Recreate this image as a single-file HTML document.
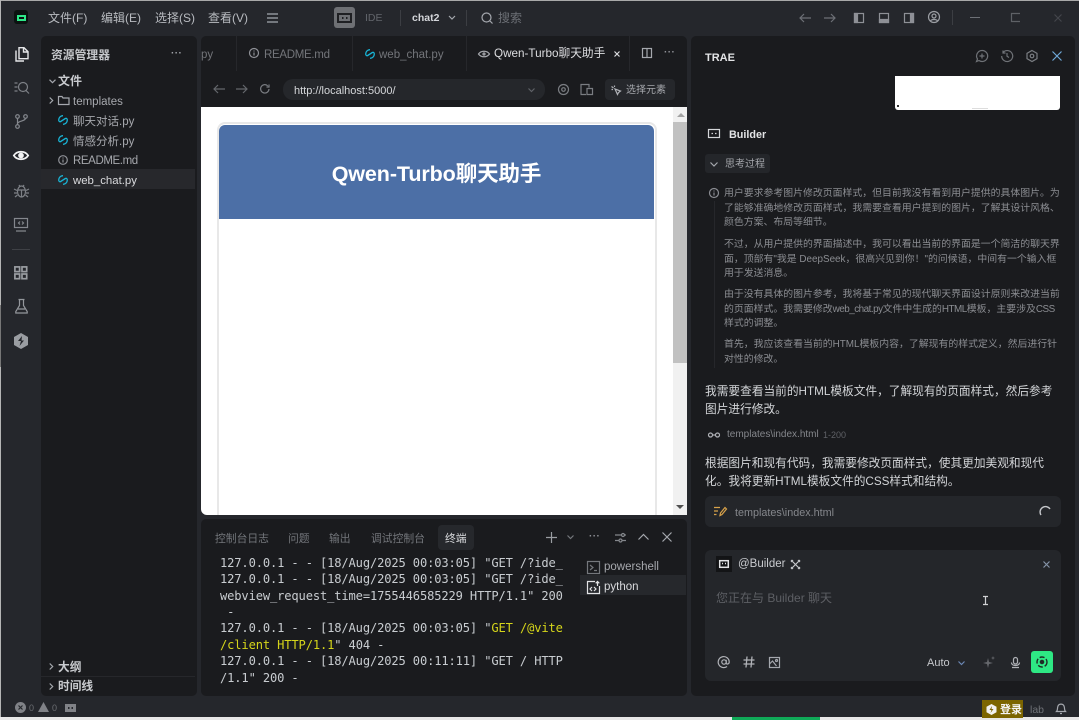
<!DOCTYPE html>
<html lang="zh">
<head>
<meta charset="utf-8">
<title>TRAE</title>
<style>
html,body{margin:0;padding:0;width:1079px;height:720px;overflow:hidden;background:#25272c}
body{position:relative;font-family:"Liberation Sans","Noto Sans CJK SC",sans-serif;color:#c9cbd0;font-size:12px}
.a{position:absolute;white-space:nowrap;line-height:16px}
svg{position:absolute;overflow:visible;fill:none;stroke:#a5a8ae;stroke-width:1.2}
.panel{position:absolute;background:#1a1b1e;border-radius:5px}
.mono{font-family:"DejaVu Sans Mono","Liberation Mono",monospace;font-size:12.1px;color:#c8ccd0;letter-spacing:-.14px}
.think{color:#8b8d92;font-size:9.900px;line-height:14.5px;left:724px}
.msg{color:#d3d5d8;font-size:11.7px;left:705px;line-height:18px}
.py{stroke:#18b4d6;stroke-width:1.3}
.n{letter-spacing:-.5px}
</style>
</head>
<body>
<!-- window edges -->
<div class="a" style="left:0;top:0;width:1079px;height:1px;background:#a9a9a9"></div>
<div class="a" style="left:0;top:0;width:1px;height:720px;background:#b5b5b5"></div>
<div class="a" style="left:0;top:717px;width:1079px;height:3px;background:#e8e8e8"></div>
<div class="a" style="left:732px;top:717px;width:88px;height:3px;background:#0fa958"></div>
<div class="a" style="left:0;top:305px;width:1px;height:62px;background:#777"></div>

<!-- title bar -->
<div class="a" style="left:14px;top:10px;width:14px;height:14px;background:#0b1210;border-radius:3px"></div>
<div class="a" style="left:17px;top:15px;width:9px;height:6px;border:2px solid #2de888;box-sizing:border-box"></div>
<div class="a" style="left:48px;top:10px;font-size:12px;color:#b8bbc0">文件(F)</div>
<div class="a" style="left:101px;top:10px;font-size:12px;color:#b8bbc0">编辑(E)</div>
<div class="a" style="left:155px;top:10px;font-size:12px;color:#b8bbc0">选择(S)</div>
<div class="a" style="left:208px;top:10px;font-size:12px;color:#b8bbc0">查看(V)</div>
<svg style="left:267px;top:13px" width="12" height="10"><path d="M0 1h11M0 5h11M0 9h11"/></svg>
<div class="a" style="left:334px;top:7px;width:21px;height:21px;background:#6e7074;border-radius:3px"></div>
<svg style="left:337px;top:13px;stroke:#1f2023;stroke-width:2" width="15" height="10"><rect x="1" y="1" width="13" height="8"/><path d="M5 5h1.500M9 5h1.500"/></svg>
<div class="a" style="left:365px;top:10px;font-size:10.500px;color:#62656b">IDE</div>
<div class="a" style="left:400px;top:10px;width:1px;height:16px;background:#3c3e43"></div>
<div class="a" style="left:412px;top:10px;font-size:10.500px;font-weight:bold;color:#d4d6da">chat2</div>
<svg style="left:448px;top:15px" width="8" height="5"><path d="M1 1l3 3 3-3"/></svg>
<div class="a" style="left:466px;top:10px;width:1px;height:16px;background:#3c3e43"></div>
<svg style="left:481px;top:12px" width="12" height="12"><circle cx="5.500" cy="5.500" r="4.500"/><path d="M9 9l2.500 2.500"/></svg>
<div class="a" style="left:498px;top:10px;font-size:12px;color:#6c6f75">搜索</div>
<svg style="left:799px;top:12px;stroke:#6d7076" width="12" height="12"><path d="M12 6H1M5 2L1 6l4 4"/></svg>
<svg style="left:824px;top:12px;stroke:#6d7076" width="12" height="12"><path d="M0 6h11M7 2l4 4-4 4"/></svg>
<svg style="left:854px;top:13px;stroke:#8e9096" width="10" height="10"><rect x=".5" y=".5" width="9" height="9"/><rect x=".5" y=".5" width="3" height="9" fill="#8e9096"/></svg>
<svg style="left:879px;top:13px;stroke:#8e9096" width="10" height="10"><rect x=".5" y=".5" width="9" height="9"/><rect x=".5" y="6.500" width="9" height="3" fill="#8e9096"/></svg>
<svg style="left:904px;top:13px;stroke:#8e9096" width="10" height="10"><rect x=".5" y=".5" width="9" height="9"/><rect x="6.500" y=".5" width="3" height="9" fill="#8e9096"/></svg>
<svg style="left:928px;top:11px;stroke:#9b9ea3" width="12" height="12"><circle cx="6" cy="6" r="5.500"/><circle cx="6" cy="5" r="2"/><path d="M2.500 10c1-2 6-2 7 0"/></svg>
<div class="a" style="left:952px;top:10px;width:1px;height:15px;background:#3c3e43"></div>
<div class="a" style="left:970px;top:17px;width:10px;height:1px;background:#6d7076"></div>
<svg style="left:1011px;top:13px;stroke:#5e6166" width="9" height="9"><path d="M9 .5H.5v8H9"/></svg>
<svg style="left:1054px;top:14px;stroke:#44464b" width="8" height="8"><path d="M.5.500l7 7M7.500.500l-7 7"/></svg>

<!-- activity bar -->
<svg style="left:15px;top:47px;stroke:#e6e7e9;stroke-width:1.400" width="14" height="15"><path d="M4 .7h5l4 4v7H4zM8.500 1v4h4M1 3.500v10.500h8"/></svg>
<svg style="left:14px;top:81px;stroke:#7d8086" width="16" height="13"><circle cx="9" cy="6" r="4.500"/><path d="M12 9.500l3 3M.5 2h3M.5 6h3M.5 10h3"/></svg>
<svg style="left:15px;top:114px;stroke:#84878d" width="13" height="15"><circle cx="2.500" cy="2.500" r="1.800"/><circle cx="2.500" cy="12.500" r="1.800"/><circle cx="10.500" cy="2.500" r="1.800"/><path d="M2.500 4.300v6.400M10.500 4.300c0 3-8 2.500-8 5.500"/></svg>
<svg style="left:13px;top:150px;stroke:#f2f3f4;stroke-width:1.700" width="16" height="11"><path d="M.8 5.500C4 .5 12 .5 15.200 5.500 12 10.500 4 10.500.8 5.500z"/><circle cx="8" cy="5.500" r="2" fill="#f2f3f4"/></svg>
<svg style="left:14px;top:183px;stroke:#7d8086" width="15" height="15"><ellipse cx="7.500" cy="8.500" rx="4" ry="5.500"/><path d="M4 7h7M7.500 7v7M5 2l1 1.500M10 2L9 3.500M0 6l3 1.500M15 6l-3 1.500M0 10h3M15 10h-3M1 14l2.500-2M14 14l-2.500-2"/></svg>
<svg style="left:14px;top:218px;stroke:#84878d" width="14" height="14"><rect x=".5" y=".5" width="13" height="9"/><path d="M2 13h10M6 3.500L4.500 5 6 6.500M8 3.500L9.500 5 8 6.500"/></svg>
<div class="a" style="left:12px;top:249px;width:18px;height:1px;background:#3f4146"></div>
<svg style="left:14px;top:266px;stroke:#9a9da2;stroke-width:1.700" width="14" height="14"><rect x=".9" y=".9" width="4.700" height="4.700"/><rect x="8" y=".9" width="4.700" height="4.700"/><rect x=".9" y="8" width="4.700" height="4.700"/><rect x="8" y="8" width="4.700" height="4.700"/></svg>
<svg style="left:15px;top:299px;stroke:#94979c" width="13" height="15"><path d="M3.500.5h6M4.500.5v6L.8 12.500v1.500h11.400v-1.500L8.500 6.500v-6M3 10h7"/></svg>
<svg style="left:14px;top:333px;stroke:none;fill:#9a9da2" width="14" height="16"><path d="M7 0l7 4v8l-7 4-7-4V4z"/><path fill="#25272c" d="M8 3L4 8h3L5.500 13 10 7.500H7.500z"/></svg>

<!-- explorer -->
<div class="panel" style="left:41px;top:36px;width:156px;height:660px"></div>
<div class="a" style="left:51px;top:47px;font-size:11.800px;color:#c5c7cb;font-weight:bold">资源管理器</div>
<div class="a" style="left:171px;top:46px;font-size:10px;color:#a0a3a8;font-weight:bold;letter-spacing:.4px">···</div>
<svg style="left:49px;top:79px" width="7" height="5"><path d="M.5.700L3.500 3.700 6.500.700"/></svg>
<div class="a" style="left:58px;top:73px;font-size:12px;font-weight:bold;color:#c9cbcf">文件</div>
<svg style="left:49px;top:97px" width="5" height="7"><path d="M.7.500l3 3-3 3"/></svg>
<svg style="left:58px;top:96px" width="11" height="9"><path d="M.5.500h3.500l1 1.500h6v6.500H.5z"/></svg>
<div class="a" style="left:73px;top:94px;font-size:11.500px;color:#a6a8ad">templates</div>
<svg class="py" style="left:58px;top:115px" width="10" height="10"><path d="M5 .7A4.300 4.300 0 0 0 .7 5c0 1.500 1 2 2 1.500L7.500 3.500M5 9.300A4.300 4.300 0 0 0 9.300 5c0-1.500-1-2-2-1.500L2.500 6.500"/></svg>
<div class="a" style="left:73px;top:114px;font-size:11.500px;color:#a6a8ad">聊天对话.py</div>
<svg class="py" style="left:58px;top:135px" width="10" height="10"><path d="M5 .7A4.300 4.300 0 0 0 .7 5c0 1.500 1 2 2 1.500L7.500 3.500M5 9.300A4.300 4.300 0 0 0 9.300 5c0-1.500-1-2-2-1.500L2.500 6.500"/></svg>
<div class="a" style="left:73px;top:134px;font-size:11.500px;color:#a6a8ad">情感分析.py</div>
<svg style="left:58px;top:155px;stroke:#8f9197" width="10" height="10"><circle cx="5" cy="5" r="4.300"/><path d="M5 4.500v3M5 2.500v1"/></svg>
<div class="a" style="left:73px;top:153px;font-size:11.500px;color:#a6a8ad;letter-spacing:-.4px">README.md</div>
<div class="a" style="left:41px;top:169px;width:154px;height:20px;background:#27282c"></div>
<svg class="py" style="left:58px;top:175px" width="10" height="10"><path d="M5 .7A4.300 4.300 0 0 0 .7 5c0 1.500 1 2 2 1.500L7.500 3.500M5 9.300A4.300 4.300 0 0 0 9.300 5c0-1.500-1-2-2-1.500L2.500 6.500"/></svg>
<div class="a" style="left:73px;top:173px;font-size:11.400px;color:#d9dadd">web_chat.py</div>
<svg style="left:49px;top:663px" width="5" height="7"><path d="M.7.500l3 3-3 3"/></svg>
<div class="a" style="left:58px;top:660px;font-size:11.700px;font-weight:bold;color:#c9cbcf">大纲</div>
<div class="a" style="left:41px;top:676px;width:154px;height:1px;background:#26272b"></div>
<svg style="left:49px;top:683px" width="5" height="7"><path d="M.7.500l3 3-3 3"/></svg>
<div class="a" style="left:58px;top:679px;font-size:11.700px;font-weight:bold;color:#c9cbcf">时间线</div>

<!-- editor -->
<div class="panel" style="left:201px;top:36px;width:486px;height:71px;border-radius:5px 5px 0 0"></div>
<div class="a" style="left:201px;top:47px;font-size:11.500px;color:#73757a">py</div>
<div class="a" style="left:236px;top:36px;width:1px;height:35px;background:#26272b"></div>
<svg style="left:249px;top:48px;stroke:#8f9197" width="10" height="10"><circle cx="5" cy="5" r="4.500"/><path d="M5 4.500v3M5 2.500v1"/></svg>
<div class="a" style="left:264px;top:47px;font-size:11.500px;color:#73757a;letter-spacing:-.3px">README.md</div>
<div class="a" style="left:352px;top:36px;width:1px;height:35px;background:#26272b"></div>
<svg class="py" style="left:365px;top:49px" width="10" height="10"><path d="M5 .7A4.300 4.300 0 0 0 .7 5c0 1.500 1 2 2 1.500L7.500 3.500M5 9.300A4.300 4.300 0 0 0 9.300 5c0-1.500-1-2-2-1.500L2.500 6.500"/></svg>
<div class="a" style="left:379px;top:47px;font-size:11.500px;color:#73757a">web_chat.py</div>
<div class="a" style="left:466px;top:36px;width:1px;height:35px;background:#26272b"></div>
<svg style="left:478px;top:50px;stroke:#a6a8ad" width="12" height="8"><path d="M.5 4C3 .300 9 .300 11.500 4 9 7.700 3 7.700.500 4z"/><circle cx="6" cy="4" r="1"/></svg>
<div class="a" style="left:494px;top:46px;font-size:11.700px;color:#dcdde0">Qwen-Turbo聊天助手</div>
<svg style="left:614px;top:51px;stroke:#dcdde0" width="6" height="6"><path d="M.5.500l5 5M5.500.500l-5 5"/></svg>
<div class="a" style="left:629px;top:36px;width:1px;height:35px;background:#26272b"></div>
<svg style="left:642px;top:48px;stroke:#a5a8ae" width="10" height="10"><rect x=".5" y=".5" width="9" height="9"/><path d="M5 .5v9"/></svg>
<div class="a" style="left:664px;top:45px;font-size:10px;color:#8e9096;font-weight:bold;letter-spacing:.4px">···</div>
<svg style="left:213px;top:84px;stroke:#64676c" width="12" height="10"><path d="M12 5H1M5 1L1 5l4 4"/></svg>
<svg style="left:236px;top:84px;stroke:#64676c" width="12" height="10"><path d="M0 5h11M7 1l4 4-4 4"/></svg>
<svg style="left:260px;top:84px;stroke:#7a7d82" width="10" height="10"><path d="M9 5a4.200 4.200 0 1 1-1.300-3.200M9 .5v2.500H6.500"/></svg>
<div class="a" style="left:283px;top:79px;width:262px;height:21px;background:#25272b;border-radius:10px"></div>
<div class="a" style="left:294px;top:83px;font-size:11px;color:#d5d7da">http://localhost:5000/</div>
<svg style="left:528px;top:88px;stroke:#5f6267" width="7" height="4"><path d="M.5.500l3 3 3-3"/></svg>
<svg style="left:558px;top:84px;stroke:#7a7d82" width="11" height="11"><circle cx="5.500" cy="5.500" r="5"/><circle cx="5.500" cy="5.500" r="1.800"/></svg>
<svg style="left:580px;top:84px;stroke:#7a7d82" width="13" height="11"><path d="M1 10.500V.5h8v3M.5 10.500H6M7 4.500h5.500v6H7z"/></svg>
<div class="a" style="left:605px;top:79px;width:70px;height:21px;background:#25272b;border-radius:4px"></div>
<svg style="left:611px;top:85px;stroke:#b0b2b7" width="10" height="10"><path d="M4 4l5.500 2-2 1.500-1 2zM.5 1.500l2 1.500M3.500.5v1.500M.5 4.500h1.500"/></svg>
<div class="a" style="left:626px;top:83px;font-size:10px;color:#a6a8ad">选择元素</div>

<!-- webview -->
<div class="a" style="left:201px;top:107px;width:486px;height:408px;background:#fff;border-radius:0 0 6px 6px"></div>
<div class="a" style="left:217px;top:122px;width:440px;height:393px;background:#fff;border:2px solid #e8e8e8;border-bottom:0;border-radius:8px 8px 0 0;box-sizing:border-box"></div>
<div class="a" style="left:219px;top:125px;width:435px;height:94px;background:#4c6fa6;border-radius:6px 6px 0 0"></div>
<div class="a" style="left:219px;top:160px;width:435px;text-align:center;font-size:21.500px;line-height:28px;font-weight:bold;color:#fff;letter-spacing:-.1px">Qwen-Turbo聊天助手</div>
<div class="a" style="left:673px;top:107px;width:14px;height:408px;background:#f1f1f1"></div>
<div class="a" style="left:673px;top:122px;width:14px;height:241px;background:#c1c1c1"></div>
<div class="a" style="left:677px;top:113px;width:0;height:0;border:4px solid transparent;border-bottom-color:#a3a3a3;border-top:0"></div>
<div class="a" style="left:676px;top:505px;width:0;height:0;border:4.500px solid transparent;border-top-color:#505050;border-bottom:0"></div>

<!-- terminal -->
<div class="panel" style="left:201px;top:519px;width:486px;height:177px"></div>
<div class="a" style="left:215px;top:531px;font-size:10.800px;color:#73767b">控制台日志</div>
<div class="a" style="left:288px;top:531px;font-size:10.800px;color:#73767b">问题</div>
<div class="a" style="left:329px;top:531px;font-size:10.800px;color:#73767b">输出</div>
<div class="a" style="left:371px;top:531px;font-size:10.800px;color:#73767b">调试控制台</div>
<div class="a" style="left:438px;top:525px;width:36px;height:25px;background:#26282c;border-radius:4px"></div>
<div class="a" style="left:445px;top:531px;font-size:10.800px;color:#d9dadd">终端</div>
<svg style="left:546px;top:532px;stroke:#9a9da2" width="11" height="11"><path d="M5.500 0v11M0 5.500h11"/></svg>
<svg style="left:567px;top:535px;stroke:#74777c" width="7" height="4"><path d="M.5.500l3 3 3-3"/></svg>
<div class="a" style="left:589px;top:529px;font-size:10px;color:#8e9096;font-weight:bold;letter-spacing:.4px">···</div>
<svg style="left:615px;top:532px;stroke:#84878c" width="11" height="11"><path d="M0 3h6.500M0 8.500h3.500M7 8.500h4M11 3H9.500"/><circle cx="8" cy="3" r="1.500"/><circle cx="5.500" cy="8.500" r="1.500"/></svg>
<svg style="left:638px;top:534px;stroke:#a5a8ae" width="11" height="6"><path d="M.5 5.500L5.500.5l5 5"/></svg>
<svg style="left:662px;top:532px;stroke:#a5a8ae" width="10" height="10"><path d="M.5.500l9 9M9.500.500l-9 9"/></svg>
<div class="a mono" style="left:220px;top:555px">127.0.0.1 - - [18/Aug/2025 00:03:05] "GET /?ide_</div>
<div class="a mono" style="left:220px;top:571px">127.0.0.1 - - [18/Aug/2025 00:03:05] "GET /?ide_</div>
<div class="a mono" style="left:220px;top:588px">webview_request_time=1755446585229 HTTP/1.1" 200</div>
<div class="a mono" style="left:220px;top:604px">&nbsp;-</div>
<div class="a mono" style="left:220px;top:620px">127.0.0.1 - - [18/Aug/2025 00:03:05] "<span style="color:#d5d51a">GET /@vite</span></div>
<div class="a mono" style="left:220px;top:637px"><span style="color:#d5d51a">/client HTTP/1.1</span>" 404 -</div>
<div class="a mono" style="left:220px;top:653px">127.0.0.1 - - [18/Aug/2025 00:11:11] "GET / HTTP</div>
<div class="a mono" style="left:220px;top:670px">/1.1" 200 -</div>
<svg style="left:587px;top:561px;stroke:#74777c" width="13" height="13"><rect x=".5" y=".5" width="12" height="12"/><path d="M3 4l3 2.500L3 9M7 9.500h3"/></svg>
<div class="a" style="left:604px;top:559px;font-size:11.500px;color:#a6a8ad">powershell</div>
<div class="a" style="left:580px;top:575px;width:106px;height:20px;background:#26282c"></div>
<svg style="left:587px;top:581px;stroke:#e2e3e5" width="13" height="13"><path d="M8 .5H.5v12h12V5M10.500 5V.8M8.700 2.300L10.500.5l1.800 1.800M5 6L3 8l2 2M7 6l2 2-2 2"/></svg>
<div class="a" style="left:604px;top:579px;font-size:11.500px;color:#d9dadd">python</div>

<!-- right panel -->
<div class="panel" style="left:691px;top:36px;width:384px;height:660px"></div>
<div class="a" style="left:705px;top:50px;font-size:11px;font-weight:bold;color:#e3e4e6">TRAE</div>
<svg style="left:976px;top:50px;stroke:#6f7277" width="12" height="12"><path d="M6 .5a5.500 5.500 0 1 1-3 10L.5 11.500l1-2.500A5.500 5.500 0 0 1 6 .5zM6 3.500v5M3.500 6h5"/></svg>
<svg style="left:1001px;top:50px;stroke:#6f7277" width="12" height="12"><path d="M2 2.500A5.500 5.500 0 1 1 .7 6M2 .5v2.500h2.500M6 3v3.200l2 1.300"/></svg>
<svg style="left:1026px;top:50px;stroke:#7a7d82" width="12" height="12"><path d="M6 .5l5 2.800v5.400L6 11.500 1 8.700V3.300z"/><circle cx="6" cy="6" r="1.800"/></svg>
<svg style="left:1052px;top:51px;stroke:#6fa8d8" width="10" height="10"><path d="M.5.500l9 9M9.500.500l-9 9"/></svg>
<div class="a" style="left:895px;top:76px;width:165px;height:34px;background:#fff;border-radius:0 0 3px 3px"></div>
<div class="a" style="left:897px;top:105px;width:2px;height:2px;background:#333"></div>
<div class="a" style="left:972px;top:108px;width:16px;height:1px;background:#ddd"></div>
<svg style="left:708px;top:129px;stroke:#d5d7da" width="12" height="9"><rect x=".5" y=".5" width="11" height="8"/><path d="M3.500 4.500h1.500M7 4.500h1.500"/></svg>
<div class="a" style="left:729px;top:127px;font-size:10.800px;font-weight:bold;color:#e3e4e6">Builder</div>
<div class="a" style="left:705px;top:154px;width:65px;height:19px;background:#24262a;border-radius:3px"></div>
<svg style="left:710px;top:162px;stroke:#a5a8ae" width="8" height="5"><path d="M.5.500l3.500 3.500L7.500.5"/></svg>
<div class="a" style="left:725px;top:157px;font-size:10px;color:#a6a8ad">思考过程</div>
<svg style="left:709px;top:188px;stroke:#8a8c92" width="10" height="10"><circle cx="5" cy="5" r="4.500"/><path d="M5 4.500v3M5 2.500v1"/></svg>
<div class="a" style="left:714px;top:201px;width:1px;height:167px;background:#26272b"></div>
<div class="a think" style="top:187px">用户要求参考图片修改页面样式，但目前我没有看到用户提供的具体图片。为<br>了能够准确地修改页面样式，我需要查看用户提到的图片，了解其设计风格、<br>颜色方案、布局等细节。</div>
<div class="a think" style="top:238px">不过，从用户提供的界面描述中，我可以看出当前的界面是一个简洁的聊天界<br>面，顶部有"我是 DeepSeek，很高兴见到你！"的问候语，中间有一个输入框<br>用于发送消息。</div>
<div class="a think" style="top:288px">由于没有具体的图片参考，我将基于常见的现代聊天界面设计原则来改进当前<br>的页面样式。我需要修改<span class="n">web_chat.py</span>文件中生成的<span class="n">HTML</span>模板，主要涉及<span class="n">CSS</span><br>样式的调整。</div>
<div class="a think" style="top:338px">首先，我应该查看当前的HTML模板内容，了解现有的样式定义，然后进行针<br>对性的修改。</div>
<div class="a msg" style="top:383px">我需要查看当前的HTML模板文件，了解现有的页面样式，然后参考<br>图片进行修改。</div>
<svg style="left:708px;top:432px;stroke:#b0b2b7" width="12" height="6"><circle cx="2.500" cy="3" r="2"/><circle cx="9.500" cy="3" r="2"/><path d="M4.500 3h3"/></svg>
<div class="a" style="left:727px;top:427px;font-size:10px;color:#85878c">templates\index.html</div>
<div class="a" style="left:823px;top:427px;font-size:9px;color:#5f6166">1-200</div>
<div class="a msg" style="top:455px">根据图片和现有代码，我需要修改页面样式，使其更加美观和现代<br>化。我将更新HTML模板文件的CSS样式和结构。</div>
<div class="a" style="left:705px;top:496px;width:356px;height:31px;background:#24262a;border-radius:6px"></div>
<svg style="left:714px;top:506px;stroke:#d8a24a" width="13" height="11"><path d="M0 1.500h6M0 5h4M0 8.500h2.500M6 9.500l.5-2.500L11 1.500l1.500 1.500-4.500 5.500z"/></svg>
<div class="a" style="left:735px;top:505px;font-size:10.800px;color:#85878c">templates\index.html</div>
<svg style="left:1040px;top:506px;stroke:#c5c7cb;stroke-width:1.400" width="11" height="11"><path d="M1 9A5 5 0 0 1 10 3"/></svg>

<!-- chat input -->
<div class="a" style="left:705px;top:550px;width:356px;height:131px;background:#24262a;border-radius:6px"></div>
<div class="a" style="left:716px;top:556px;width:16px;height:16px;background:#131416"></div>
<svg style="left:719px;top:560px;stroke:#e3e4e6;stroke-width:1.500" width="10" height="8"><rect x=".7" y=".7" width="8.600" height="6.600"/><path d="M3 3.500h1M6 3.500h1"/></svg>
<div class="a" style="left:738px;top:556px;font-size:11.500px;color:#c9cbcf">@Builder</div>
<svg style="left:790px;top:559px;stroke:#c5c7cb" width="11" height="11"><path d="M1 1l9 9M10 1L1 10M1 3l2-2M8 10l2-2M8 1l2 2M1 8l2 2"/></svg>
<svg style="left:1043px;top:561px;stroke:#8593a8" width="7" height="7"><path d="M.5.500l6 6M6.500.500l-6 6"/></svg>
<div class="a" style="left:716px;top:590px;font-size:12px;color:#5d5f64">您正在与 Builder 聊天</div>
<svg style="left:983px;top:596px;stroke:#d0d1d4" width="5" height="9"><path d="M0 .5h5M2.500.5v8M0 8.500h5"/></svg>
<svg style="left:718px;top:656px;stroke:#b0b2b7" width="12" height="12"><circle cx="6" cy="6" r="2.200"/><path d="M8.200 3.800v3.200c0 1.500 3 1.500 3-1A5.500 5.500 0 1 0 9 10.500"/></svg>
<svg style="left:743px;top:656px;stroke:#b0b2b7;stroke-width:1.300" width="12" height="12"><path d="M4 .5L3 11.500M9 .5L8 11.500M.5 4h11M.5 8h11"/></svg>
<svg style="left:769px;top:657px;stroke:#a5a8ae" width="11" height="11"><rect x=".5" y=".5" width="10" height="10"/><circle cx="7.500" cy="3.500" r="1"/><path d="M.5 7l3-3 4 5"/></svg>
<div class="a" style="left:927px;top:655px;font-size:11px;color:#c5c7cb">Auto</div>
<svg style="left:958px;top:661px;stroke:#6b87b5" width="7" height="4"><path d="M.5.500l3 3 3-3"/></svg>
<svg style="left:983px;top:656px;stroke:none;fill:#66686d" width="12" height="12"><path d="M5 2l1 4 4 1-4 1-1 4-1-4-4-1 4-1zM10 0l.5 1.500L12 2l-1.500.5L10 4l-.5-1.500L8 2l1.500-.5z"/></svg>
<svg style="left:1011px;top:657px;stroke:#b0b2b7" width="9" height="11"><rect x="2.500" y=".5" width="4" height="6.500" rx="2"/><path d="M.5 5.500c0 4 8 4 8 0M1 10.500h7"/></svg>
<div class="a" style="left:1031px;top:651px;width:22px;height:22px;background:#2ee884;border-radius:3px"></div>
<svg style="left:1036px;top:656px;stroke:#1f2a25;stroke-width:1.400" width="12" height="12"><circle cx="6" cy="6" r="5" stroke-dasharray="5 2"/><circle cx="6" cy="6" r="1.600" fill="#1f2a25"/></svg>

<!-- status bar -->
<svg style="left:15px;top:702px;stroke:#25272c;fill:#808287" width="11" height="11"><circle cx="5.500" cy="5.500" r="5.500" stroke="none"/><path d="M3.500 3.500l4 4M7.500 3.500l-4 4"/></svg>
<div class="a" style="left:29px;top:700px;font-size:9px;color:#6b6d72">0</div>
<svg style="left:38px;top:702px;stroke:none;fill:#808287" width="11" height="10"><path d="M5.500 0L11 10H0z"/></svg>
<div class="a" style="left:52px;top:700px;font-size:9px;color:#6b6d72">0</div>
<svg style="left:65px;top:704px;stroke:none;fill:#808287" width="11" height="8"><path d="M0 0h11v8H0z"/><path fill="#25272c" d="M3 3h1.500v2H3zM6.500 3H8v2H6.500z"/></svg>
<div class="a" style="left:982px;top:700px;width:41px;height:18px;background:#7c6500"></div>
<svg style="left:986px;top:704px;stroke:none;fill:#f2f2f2" width="11" height="11"><path d="M5.500 0l5 2.800v5.400l-5 2.800-5-2.800V2.800z"/><path fill="#7c6500" d="M6 2L3.500 6H5.500L4.500 9l3-4H5.500z"/></svg>
<div class="a" style="left:1000px;top:702px;font-size:11px;font-weight:bold;color:#f5f5f5">登录</div>
<div class="a" style="left:1030px;top:702px;font-size:10.500px;color:#6e7176">lab</div>
<svg style="left:1056px;top:703px;stroke:#a5a8ae" width="10" height="11"><path d="M.5 8.500c1.500-1.500.5-3 1.500-5.500 1-2.500 5-2.500 6 0 1 2.500 0 4 1.500 5.500zM4 10.500h2"/></svg>
</body>
</html>
